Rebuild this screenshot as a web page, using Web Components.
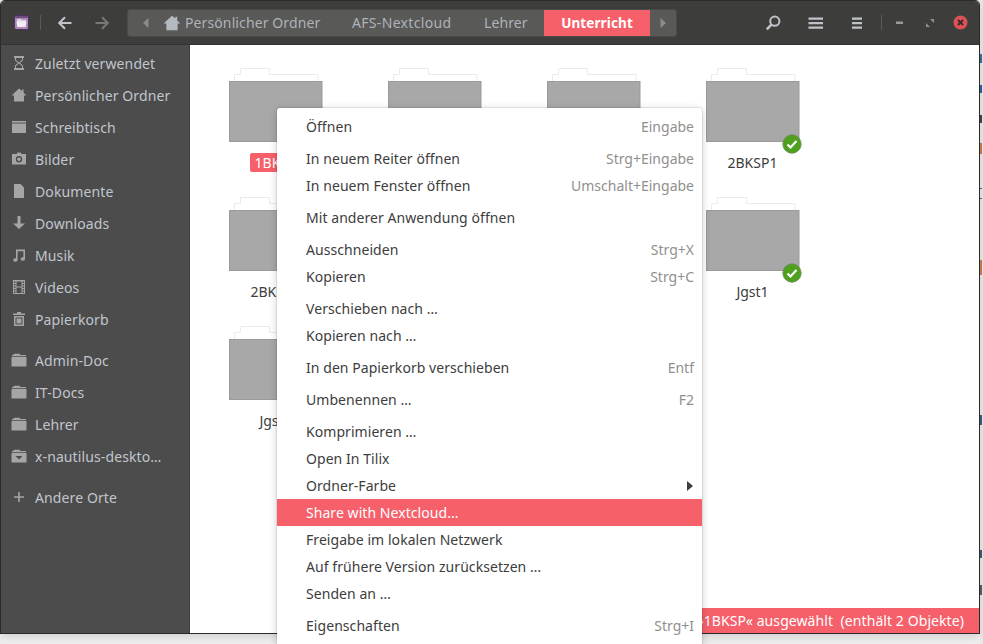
<!DOCTYPE html>
<html lang="de">
<head>
<meta charset="utf-8">
<title>Unterricht</title>
<style>
  html, body { margin: 0; height: 100%; overflow: hidden; }
  body { background: #eeeeee; font-family: "Noto Sans", "Open Sans", sans-serif; font-size: 14px; }
</style>
</head>
<body>
<back-strip></back-strip>
<nautilus-window>
  <title-bar slot="top"></title-bar>
  <side-bar slot="side">
    <side-item icon="recent">Zuletzt verwendet</side-item>
    <side-item icon="home">Persönlicher Ordner</side-item>
    <side-item icon="desktop">Schreibtisch</side-item>
    <side-item icon="camera">Bilder</side-item>
    <side-item icon="doc">Dokumente</side-item>
    <side-item icon="download">Downloads</side-item>
    <side-item icon="music">Musik</side-item>
    <side-item icon="film">Videos</side-item>
    <side-item icon="trash">Papierkorb</side-item>
    <side-sep></side-sep>
    <side-item icon="folder">Admin-Doc</side-item>
    <side-item icon="folder">IT-Docs</side-item>
    <side-item icon="folder">Lehrer</side-item>
    <side-item icon="share">x-nautilus-deskto…</side-item>
    <side-sep></side-sep>
    <side-item icon="plus">Andere Orte</side-item>
  </side-bar>
  <file-grid slot="main">
    <folder-item selected>1BKSP</folder-item>
    <folder-item></folder-item>
    <folder-item></folder-item>
    <folder-item synced>2BKSP1</folder-item>
    <folder-item>2BKSP2</folder-item>
    <folder-item></folder-item>
    <folder-item></folder-item>
    <folder-item synced>Jgst1</folder-item>
    <folder-item>Jgst2</folder-item>
  </file-grid>
  <status-bar slot="main">»1BKSP« ausgewählt&nbsp; (enthält 2 Objekte)</status-bar>
  <context-menu slot="overlay">
    <menu-item key="Eingabe">Öffnen</menu-item>
    <menu-gap></menu-gap>
    <menu-item key="Strg+Eingabe">In neuem Reiter öffnen</menu-item>
    <menu-item key="Umschalt+Eingabe">In neuem Fenster öffnen</menu-item>
    <menu-gap></menu-gap>
    <menu-item>Mit anderer Anwendung öffnen</menu-item>
    <menu-gap></menu-gap>
    <menu-item key="Strg+X">Ausschneiden</menu-item>
    <menu-item key="Strg+C">Kopieren</menu-item>
    <menu-gap></menu-gap>
    <menu-item>Verschieben nach …</menu-item>
    <menu-item>Kopieren nach …</menu-item>
    <menu-gap></menu-gap>
    <menu-item key="Entf">In den Papierkorb verschieben</menu-item>
    <menu-gap></menu-gap>
    <menu-item key="F2">Umbenennen …</menu-item>
    <menu-gap></menu-gap>
    <menu-item>Komprimieren …</menu-item>
    <menu-item>Open In Tilix</menu-item>
    <menu-item submenu>Ordner-Farbe</menu-item>
    <menu-item active>Share with Nextcloud...</menu-item>
    <menu-item>Freigabe im lokalen Netzwerk</menu-item>
    <menu-item>Auf frühere Version zurücksetzen …</menu-item>
    <menu-item>Senden an …</menu-item>
    <menu-gap></menu-gap>
    <menu-item key="Strg+I">Eigenschaften</menu-item>
  </context-menu>
</nautilus-window>

<script>
const ICONS = {
  recent: '<path d="M3 1h10v2H3zM3 13h10v2H3z"/><path d="M4 3v2.5L7 8l-3 2.5V13h1v-2l3-2.4 3 2.4v2h1v-2.5L9 8l3-2.5V3h-1v2L8 7.4 5 5V3z"/>',
  home: '<path d="M11 2.5h1.6v3.2L15.5 8.5H13v6H3v-6H.5L8 1.5l3 2.4z"/>',
  desktop: '<path d="M1 2h14v12H1z"/><path d="M1 3.6h14v.9H1z" fill="#4c4c4c"/>',
  camera: '<path fill-rule="evenodd" d="M5.5 3 6.5 1.5h3L10.5 3H15v10.5H1V3zM8 5a3.2 3.2 0 1 0 0 6.4A3.2 3.2 0 0 0 8 5z"/><circle cx="8" cy="8.2" r="1.8"/>',
  doc: '<path d="M3 1h6.5L13 4.5V15H3z"/>',
  download: '<path d="M6.5 1h3v7.5H14L8 14 2 8.5h4.5z"/>',
  music: '<path d="M5 2.5h9V12a2.2 1.8 0 1 1-1.6-1.7V4.2H6.6V13a2.2 1.8 0 1 1-1.6-1.7z"/>',
  film: '<path fill-rule="evenodd" d="M2 1h12v14H2zM3 2.5V4h1.5V2.5zM3 5v1.5h1.5V5zM3 7.5V9h1.5V7.5zM3 10v1.5h1.5V10zM3 12.5V14h1.5v-1.5zM11.5 2.5V4H13V2.5zM11.5 5v1.5H13V5zM11.5 7.5V9H13V7.5zM11.5 10v1.5H13V10zM11.5 12.5V14H13v-1.5zM5.5 2.5v5h5v-5zM5.5 8.5v5.5h5V8.5z"/>',
  trash: '<path d="M2 2.5h12V4H2zM6 1h4v1.5H6z"/><path fill-rule="evenodd" d="M3 5h10v10H3zM4.5 6.5v7h7v-7z"/><path d="M5.5 7.5h5v5h-5z"/>',
  folder: '<path d="M2.5 1.8h6l.8 1.2H15v1.2H1V3h1.5z"/><path d="M.5 5h15v9.5H.5z"/>',
  share: '<path d="M2.5 1.8h6l.8 1.2H15v1.2H1V3h1.5z"/><path fill-rule="evenodd" d="M.5 5h15v9.5H.5zM4.5 8l3.5 3.5L11.5 8z"/>',
  plus: '<path d="M7.2 3h1.6v4.2H13v1.6H8.8V13H7.2V8.8H3V7.2h4.2z"/>'
};

// bits of the window behind, showing in the strip right of the file manager
const BACK_BITS = [
  [54, 9, '#3f6f9f'], [85, 8, '#2f5f9f'], [115, 8, '#4a3f4f'], [143, 11, '#c87f55'],
  [188, 1, '#3f6f9f'], [198, 1, '#3f6f9f'], [260, 15, '#c87f55'],
  [415, 10, '#3f5f7f'], [550, 8, '#3f5f7f'], [585, 10, '#55606a']
];

class BackStrip extends HTMLElement {
  connectedCallback() {
    this.attachShadow({ mode: 'open' });
    const bits = BACK_BITS.map(([y, h, c]) => `<i style="top:${y}px;height:${h}px;background:${c}"></i>`).join('');
    this.shadowRoot.innerHTML = `
      <style>
        :host { position: absolute; left: 980px; top: 0; width: 3px; height: 644px; background: #e8e8e8; }
        i { position: absolute; left: 0; width: 2px; }
      </style>
      ${bits}
    `;
  }
}

class NautilusWindow extends HTMLElement {
  connectedCallback() {
    this.attachShadow({ mode: 'open' });
    this.shadowRoot.innerHTML = `
      <style>
        :host {
          display: grid;
          grid-template-rows: 44px 1fr;
          grid-template-columns: 189px 1fr;
          position: relative;
          width: 978px;
          height: 632px;
          margin: 1px 0 0 1px;
          box-shadow: 0 0 0 1px #2b2b2b, 0 3px 10px rgba(0,0,0,.14);
          border-radius: 4px 4px 0 0;
          background: #fff;
        }
        .top { grid-column: 1 / 3; }
        .main { position: relative; background: #fff; min-height: 0; }
        .overlay { position: absolute; left: 276px; top: 107px; z-index: 5; }
      </style>
      <div class="top"><slot name="top"></slot></div>
      <slot name="side"></slot>
      <div class="main"><slot name="main"></slot></div>
      <div class="overlay"><slot name="overlay"></slot></div>
    `;
  }
}

class TitleBar extends HTMLElement {
  connectedCallback() {
    this.attachShadow({ mode: 'open' });
    this.shadowRoot.innerHTML = `
      <style>
        :host {
          display: flex;
          align-items: center;
          height: 44px;
          background: #3d3d3b;
          border-bottom: 1px solid #333;
          box-sizing: border-box;
          border-radius: 4px 4px 0 0;
          color: #aeb4ba;
        }
        svg { display: block; flex: none; }
        .sep { width: 1px; height: 15px; background: #5a5a58; flex: none; }
        .path {
          display: flex; align-items: stretch;
          height: 28px; width: 550px; margin-left: 16px;
          background: #595957; border-radius: 3px; border: 1px solid #4a4a48; box-sizing: border-box;
          font-size: 14px; color: #adb3b9; letter-spacing: .11px;
        }
        .path span { display: flex; align-items: center; white-space: nowrap; }
        .sel { background: #f6606a; color: #fff; font-weight: 700; font-size: 13.5px; justify-content: center; width: 106px; margin-left: 16px; }
      </style>
      <svg style="margin-left:13px" width="15" height="15" viewBox="0 0 15 15">
        <rect x=".5" y=".5" width="14" height="14" rx="2" fill="#a98bb6" stroke="#4f3060"/>
        <path d="M1 1h13v2H1z" fill="#6f4d7e"/>
        <path d="M3 4h4l1 1h4v2H3z" fill="#e2d5e7"/><path d="M2.5 6.6h10l-.9 5.4H3.4z" fill="#f3edf5"/>
      </svg>
      <div class="sep" style="margin-left:11px"></div>
      <svg style="margin-left:15px" width="18" height="18" viewBox="0 0 18 18" fill="none" stroke="#c2c6ca" stroke-width="2"><path d="M15.5 9H3.5M9 3.2 3.2 9 9 14.8"/></svg>
      <svg style="margin-left:19px" width="18" height="18" viewBox="0 0 18 18" fill="none" stroke="#787977" stroke-width="2"><path d="M2.5 9h12M9 3.2 14.8 9 9 14.8"/></svg>
      <div class="path">
        <span style="width:35px;justify-content:center"><svg width="8" height="12" viewBox="0 0 8 12"><path d="M6.5 1v10L1 6z" fill="#8b8d8c"/></svg></span>
        <span><svg width="18" height="18" viewBox="0 0 16 16" fill="#b4bac2"><path d="M11 2.5h1.6v3.2L15.5 8.5H13v6H3v-6H.5L8 1.5l3 2.4z"/></svg></span>
        <span style="margin-left:4px;width:136px">Persönlicher Ordner</span>
        <span style="margin-left:31px;width:100px;letter-spacing:.32px">AFS-Nextcloud</span>
        <span style="margin-left:32px;width:44px">Lehrer</span>
        <span class="sel">Unterricht</span>
        <span style="flex:1;justify-content:center"><svg width="8" height="12" viewBox="0 0 8 12"><path d="M1.5 1v10L7 6z" fill="#8b8d8c"/></svg></span>
      </div>
      <svg style="margin-left:88px" width="16" height="16" viewBox="0 0 16 16" fill="none" stroke="#bfc3c7" stroke-width="2"><circle cx="9.8" cy="6.2" r="4.6"/><path d="M6.4 9.6 1.8 14.4" stroke-width="2.6"/></svg>
      <svg style="margin-left:27px" width="16" height="14" viewBox="0 0 16 14" fill="#bfc3c7"><path d="M.5 1.5h14.5v2.2H.5zM.5 6h14.5v2.2H.5zM.5 10.5h14.5v2.2H.5z"/></svg>
      <svg style="margin-left:27px" width="12" height="14" viewBox="0 0 12 14" fill="#bfc3c7"><path d="M1 1.5h10v2.2H1zM1 6h10v2.2H1zM1 10.5h10v2.2H1z"/></svg>
      <div class="sep" style="margin-left:18px"></div>
      <svg style="margin-left:14px" width="8" height="4" viewBox="0 0 8 4"><rect y=".5" width="7" height="2.5" fill="#9a9a98"/></svg>
      <svg style="margin-left:22px" width="8" height="8" viewBox="0 0 8 8" fill="#8f8f8d"><path d="M4 0h4v4zM0 4l4 4H0z"/></svg>
      <svg style="margin-left:19px" width="15" height="15" viewBox="0 0 15 15"><circle cx="7.5" cy="7.5" r="7" fill="#dc5058"/><path d="M5 5l5 5M10 5l-5 5" stroke="#3a2b2b" stroke-width="2"/></svg>
    `;
  }
}

class SideBar extends HTMLElement {
  connectedCallback() {
    this.attachShadow({ mode: 'open' });
    this.shadowRoot.innerHTML = `
      <style>
        :host {
          display: flex; flex-direction: column;
          padding-top: 2px;
          background: #4c4c4c;
          border-right: 1px solid #3f3f3f;
          box-sizing: border-box;
          min-height: 0;
        }
      </style>
      <slot></slot>
    `;
  }
}

class SideItem extends HTMLElement {
  connectedCallback() {
    this.attachShadow({ mode: 'open' });
    const icon = ICONS[this.getAttribute('icon')] || '';
    this.shadowRoot.innerHTML = `
      <style>
        :host {
          display: flex; align-items: center; flex: none;
          height: 32px; padding-left: 10px;
          color: #c0c6cc; font-size: 14px; letter-spacing: .11px; white-space: nowrap;
        }
        svg { width: 16px; height: 16px; fill: #a5a5a3; flex: none; margin-right: 8px; }
      </style>
      <svg viewBox="0 0 16 16">${icon}</svg><slot></slot>
    `;
  }
}

class SideSep extends HTMLElement {
  connectedCallback() {
    this.attachShadow({ mode: 'open' });
    this.shadowRoot.innerHTML = `<style>:host { display: block; height: 9px; flex: none; }</style>`;
  }
}

class FileGrid extends HTMLElement {
  connectedCallback() {
    this.attachShadow({ mode: 'open' });
    this.shadowRoot.innerHTML = `
      <style>
        :host {
          display: grid;
          grid-template-columns: repeat(4, 159px);
          grid-auto-rows: 129px;
          padding: 21px 0 0 6px;
        }
      </style>
      <slot></slot>
    `;
  }
}

class FolderItem extends HTMLElement {
  connectedCallback() {
    this.attachShadow({ mode: 'open' });
    const badge = this.hasAttribute('synced') ? `
      <circle cx="86" cy="76" r="9.2" fill="#4ea01e" stroke="#6a8a5a" stroke-width=".8"/>
      <path d="M81.5 76.5l3 3 6-6.5" fill="none" stroke="#fff" stroke-width="2.2"/>` : '';
    this.shadowRoot.innerHTML = `
      <style>
        :host { display: flex; flex-direction: column; align-items: center; width: 159px; color: #3d3d3d; font-size: 14px; }
        svg { display: block; overflow: visible; margin-top: 2px; }
        .label { margin-top: 11px; padding: 0 5px; height: 19px; line-height: 19px; border-radius: 2px; white-space: nowrap; }
        :host([selected]) .label { background: #f6606a; color: #fff; }
      </style>
      <svg width="94" height="74" viewBox="0 0 94 74">
        <path d="M5.5 13.5V6.5h6V.5h29v6h48.5v7" fill="#fff" stroke="#ebebeb"/>
        <rect x=".5" y="13.5" width="92.5" height="60" fill="#a8a8a8" stroke="#9a9a9a"/>
        ${badge}
      </svg>
      <div class="label"><slot></slot></div>
    `;
  }
}

class StatusBar extends HTMLElement {
  connectedCallback() {
    this.attachShadow({ mode: 'open' });
    this.shadowRoot.innerHTML = `
      <style>
        :host {
          position: absolute; right: 0; bottom: 0;
          height: 25px; padding: 0 15px 0 8px;
          display: flex; align-items: center;
          background: #f6606a; color: #fff;
          font-size: 14px; letter-spacing: .08px; white-space: nowrap;
        }
      </style>
      <slot></slot>
    `;
  }
}

class ContextMenu extends HTMLElement {
  connectedCallback() {
    this.attachShadow({ mode: 'open' });
    this.shadowRoot.innerHTML = `
      <style>
        :host {
          display: flex; flex-direction: column;
          width: 425px; height: 536px; box-sizing: border-box;
          padding-top: 5px;
          background: #fff;
          border-radius: 3px 3px 0 0;
          box-shadow: 0 0 0 1px rgba(0,0,0,.07), 0 2px 8px rgba(0,0,0,.2);
        }
      </style>
      <slot></slot>
    `;
  }
}

class MenuItem extends HTMLElement {
  connectedCallback() {
    this.attachShadow({ mode: 'open' });
    const key = this.getAttribute('key');
    this.shadowRoot.innerHTML = `
      <style>
        :host {
          display: flex; align-items: center; justify-content: space-between; flex: none;
          height: 27px; padding: 0 8px 0 29px;
          color: #3d3d3d; font-size: 14px; letter-spacing: .06px; white-space: nowrap;
        }
        :host([active]) { background: #f6606a; color: #fff; }
        .key { color: #918f8d; letter-spacing: 0; }
        svg { display: block; margin-right: 1px; }
      </style>
      <span><slot></slot></span>
      ${key ? `<span class="key">${key}</span>` : ''}
      ${this.hasAttribute('submenu') ? '<svg width="6" height="10" viewBox="0 0 6 10"><path d="M0 0l6 5-6 5z" fill="#3d3d3d"/></svg>' : ''}
    `;
  }
}

class MenuGap extends HTMLElement {
  connectedCallback() {
    this.attachShadow({ mode: 'open' });
    this.shadowRoot.innerHTML = `<style>:host { display: block; height: 5px; flex: none; }</style>`;
  }
}

customElements.define('back-strip', BackStrip);
customElements.define('nautilus-window', NautilusWindow);
customElements.define('title-bar', TitleBar);
customElements.define('side-bar', SideBar);
customElements.define('side-item', SideItem);
customElements.define('side-sep', SideSep);
customElements.define('file-grid', FileGrid);
customElements.define('folder-item', FolderItem);
customElements.define('status-bar', StatusBar);
customElements.define('context-menu', ContextMenu);
customElements.define('menu-item', MenuItem);
customElements.define('menu-gap', MenuGap);
</script>
</body>
</html>
